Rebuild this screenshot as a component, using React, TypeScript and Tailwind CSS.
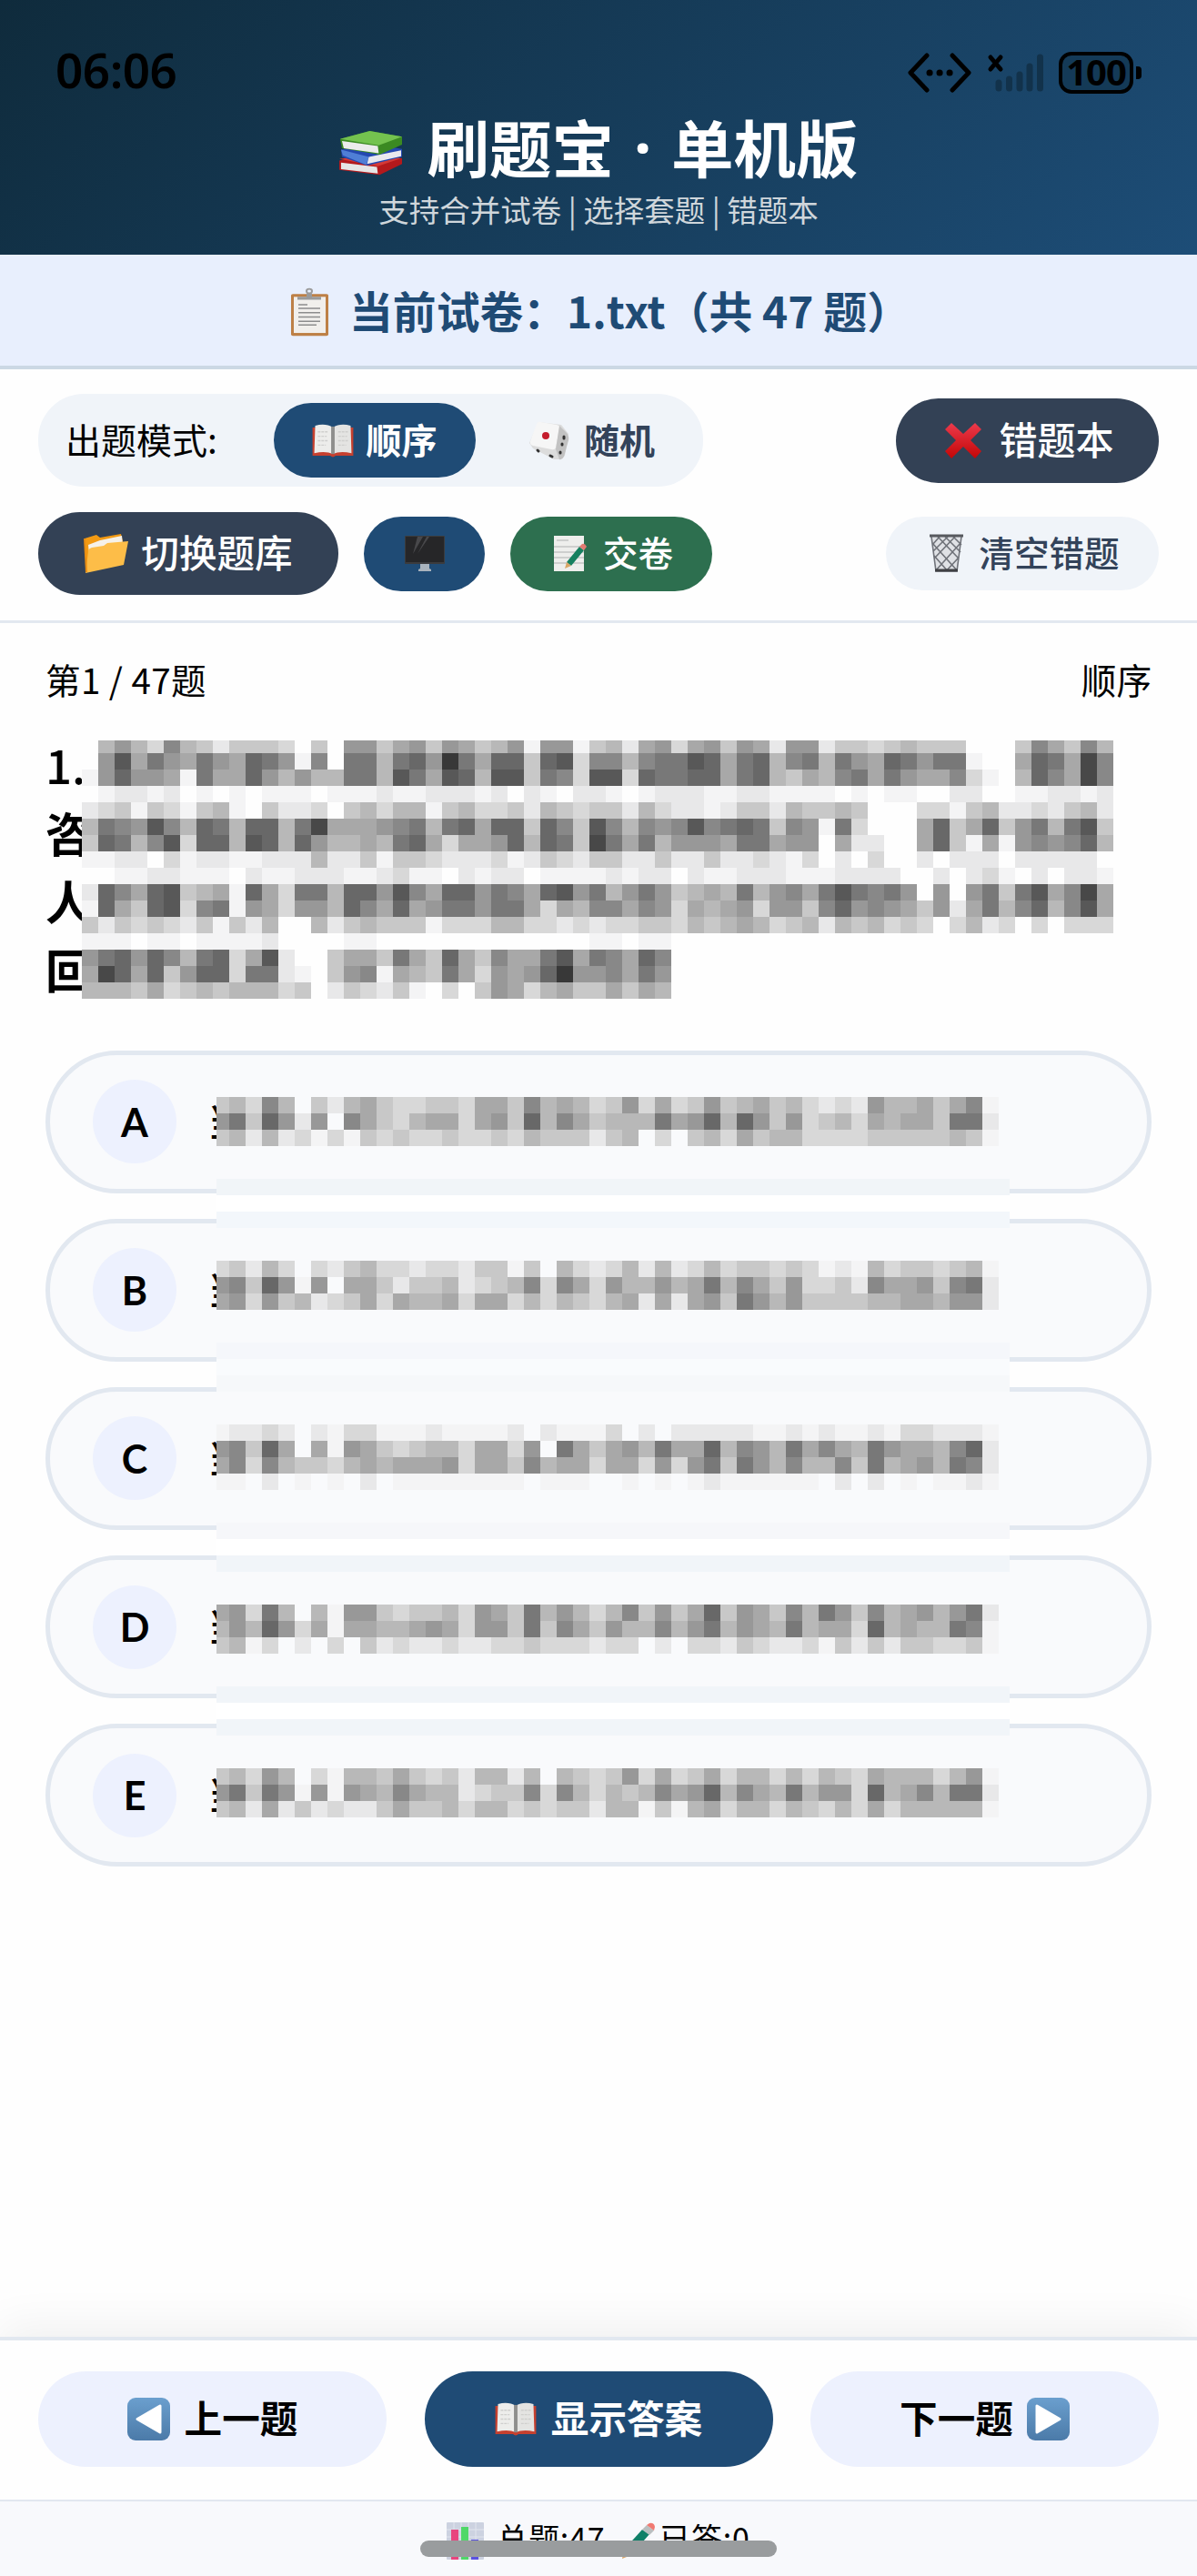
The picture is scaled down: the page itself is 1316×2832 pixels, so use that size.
import type { ReactNode } from "react";
import clsx from "clsx";

// one character per 18px cell: a hex digit is the grey level, "." leaves the cell empty
const questionRows = [
   ".b9bd8bcec ccd.c.99ca 9c9acb9f99 fcbea9da9c 9ae99eccdc bccc...c8a c8b",
   ".95a79a79a 679f8.77b7 6937a66c65 d88b87756a 76b87b79a6 7977f..a67 a48",
   "f9699af7aa 69b9bb77b5 7a56b55c78 d55d67766a 76bcab87a7 9aa8df.b68 a48",
   ".feefe.f.f .fff.fffef feeefe.ef. eef.feeeff eeffff.f.f f..ee..ffe efe",
   "edcfcdfcbf .ceed.cbdb bfcbddcebc dccebdeefe ccebccbc.. .ddfcbeede cbe",
   "b78958b67b 66b74aaa98 7b76a66c68 c58b898587 67c89f7d.. .a6ca6c97b 75c",
   "c67b85d66b 56b69bbab7 6adaa96b67 c47a7b999a 77a99.aee. .a6cfaf989 86b",
   "ffee.dfeef feeebeecfc cdeeedfecd ecceeceece edefd.e.d. .e.eee.eee ee.",
   "..ffeefff. effeeeffed ff.efee.ff ffefee.eff eeefffeeee ..e.edf.e. eef",
   "e68a65cbaf 6ad77b6695 8a66978a65 97b979cbab 7b98a75787 9.9.97c75a 84a",
   "f6ac65d87f 9ad99b68a6 a977977ada b88a89daba 9d99c86989 ac9ea7b86b 85a",
   "cecdcdecfc eb..becbcc cfdddbbdde deddccdbcb abdcbebcbd cd.dbed.d. ddd",
   "fff.ff.fff fe....ff.. .......... .ff.ff",
   "976968b76d a5e..caac7 ac6ac8aa75 a78a68",
   "a46a6c966d 77ef.c98fa bc7ad9a963 998a79",
   "bbbcadcbcb bbdc.ecdec f.d.c9adba ccacab",
];

const answerRows: Record<number, string> = {
   0: "cbd8b.ceba cddccdaac8 babdc9dadc 9cbacbdede 9bbaca8f",
   1: "97c69e9.8a cdbaada9c6 b8acbbb7a9 6b69c9dcbd abaac77e",
   2: "cbebedfdfc dcddcddcdb cccecb.d.c bdacbbdddd cccccbcf",
   10: "dcebd.decb ddeddeccfc .bdedbebed bdccdcdfef bdccdcbf",
   11: "98c69f9.aa ceccbedcb8 d8ad9bb9ba 7b8ac9ddce 8aa9c87e",
   12: "a9d9cbedca dabbadaadb dbcdbaeaea 9c79b9cccc bbaab99e",
   20: "feede.efdd fffeffffe. efffd.e.ee eeeffefeff efddeeef",
   21: "98c6a.af9a cdcbbdaad9 .7aca9b7aa 6b89b7a8ab 79aab86e",
   22: "a8d8bccdba baaa9daac8 baadaad9d9 7c79b8bb8c 7ba9b78e",
   23: "ff.e.f.f.e .ffffffff. fff..f.f.f effffff.e. e.f.ffef",
   31: "a9d7b.bf99 cdccbd9ac7 b9bdb8c9ca 6c9ac8b79c 8ba9b97e",
   32: "b9b69dafaa bba9ad99c7 c8ac9bb8b9 7b9ab7baad 6babb78f",
   33: "cbfd.e.d.c edeedeeddc dddedd.e.d decdeedfce ceccddcf",
   41: "cbd9b.dfbb cacdcebbeb .bcdc9dadc adbbdbdbcd abbbdb9f",
   42: "97c79f9f9a b8abbedcc8 d8bdbcb8a9 6b8ab7b99d 6ba8b77e",
   43: "cbeaecedee caccbdbbdc dccebbfcfb adbbdbcdbd adbbbbbf",
};

// flat strips left where the mosaic runs over the option borders
const strips: Record<number, string> = {
   5: "#f1f5f8",
   6: "#ffffff",
   7: "#f3f7fb",
   15: "#f5f7fb",
   16: "#f9fbfd",
   17: "#f6f8fa",
   26: "#f6f7fa",
   27: "#ffffff",
   28: "#f1f5f9",
   36: "#f1f5f9",
   37: "#ffffff",
   38: "#f1f5f9",
};

const grey = (c: string) => {
   if (c === "f") return "#f4f4f5";
   if (c === "e") return "#e8e8e9";
   const v = parseInt(c, 16) * 16 + 8;
   return `rgb(${v},${v},${v})`;
};

function Cells({ row, x, y, h = 18, trim = 0 }: { row: string; x: number; y: number; h?: number; trim?: number }) {
   return (
      <g>
         {row.replace(/ /g, "").split("").map((c, i) =>
            c === "." ? null : (
               <rect key={i} x={x + i * 18 + (i === 0 ? trim : 0)} y={y} width={18 - (i === 0 ? trim : 0)} height={h} fill={grey(c)} />
            )
         )}
      </g>
   );
}

function QuestionMosaic() {
   return (
      <svg width="1134" height="284" shapeRendering="crispEdges" className="absolute left-[40px] top-0">
         <rect width="1134" height="284" fill="#fefefe" />
         {questionRows.map((row, i) => (
            <Cells key={i} row={row} x={0} y={i === 0 ? 0 : i * 18 - 4} h={i === 0 ? 14 : 18} />
         ))}
      </svg>
   );
}

function AnswerMosaic() {
   return (
      <svg width="872" height="792" shapeRendering="crispEdges" className="absolute left-[188px] top-[51px]">
         <rect width="872" height="792" fill="#f9fafc" />
         {Object.entries(strips).map(([r, fill]) => (
            <rect key={r} y={Number(r) * 18} width="872" height="18" fill={fill} />
         ))}
         {Object.entries(answerRows).map(([r, row]) => (
            <Cells key={r} row={row} x={-4} y={Number(r) * 18} trim={4} />
         ))}
      </svg>
   );
}

function Books() {
   return (
      <svg width="71" height="49" viewBox="0 0 72 62" preserveAspectRatio="none">
         <path d="M1 41 34 34 71 38 71 46 46 61 1 54Z" fill="#b3191c" />
         <path d="M3 44 43 50 44 59 3 53Z" fill="#e6e6e6" />
         <path d="M1 39 35 33 70 38 44 49Z" fill="#d43a37" />
         <path d="M3 26 38 18 71 25 71 36 32 48 4 36Z" fill="#2448b0" />
         <path d="M3 26 34 36 31 47 5 34Z" fill="#4f7fd6" />
         <path d="M34 36 70 27 70 35 32 46Z" fill="#e9e9ee" />
         <path d="M2 11 35 0 71 8 71 19 46 33 4 24Z" fill="#3b8a22" />
         <path d="M4 14 44 21 45 31 6 24Z" fill="#ececec" />
         <path d="M2 11 35 0 71 8 45 20Z" fill="#74c34f" />
      </svg>
   );
}

function Clipboard() {
   return (
      <svg width="43" height="54" viewBox="0 0 43 68" preserveAspectRatio="none">
         <rect x="1" y="9" width="41" height="58" rx="2" fill="#bd8046" />
         <rect x="4" y="13" width="35" height="50" fill="#f1efec" />
         <circle cx="21" cy="5" r="3" fill="none" stroke="#9b9b9b" strokeWidth="2" />
         <path d="M18 8h6v5h10v4H8v-4h10Z" fill="#9a9a9a" />
         <path d="M9 24h10M9 29h24M9 35h24M9 41h24M9 47h24M9 52h20" stroke="#8d8d8d" strokeWidth="2" />
      </svg>
   );
}

function OpenBook() {
   return (
      <svg width="46" height="37" viewBox="0 0 46 38">
         <path d="M0 4h46v32H26q-3 3-6 0H0Z" fill="#c5402f" />
         <path d="M3 2q12-3 20 2v30q-8-4-21-1Z" fill="#ededeb" />
         <path d="M43 2Q31-1 23 4v30q8-4 21-1Z" fill="#e4e4e2" />
         <path d="M21 3h4v31h-4Z" fill="#8e8e8c" />
         <path d="M6 9h11M6 14h10M6 19h11M6 24h9M29 9h11M29 14h10M29 19h11M29 24h9" stroke="#cfcfcd" strokeWidth="1.5" strokeDasharray="3 1" />
      </svg>
   );
}

function Die() {
   return (
      <svg width="44" height="43" viewBox="0 0 44 43">
         <path d="M10 1 35 4 43 14 39 38 33 42 27 42 4 30 0 24Z" fill="#dcdcdc" />
         <path d="M8 3Q9 0 13 1L30 4Q34 5 33 8L29 29Q28 32 24 31L4 27Q0 26 1 22Z" fill="#f6f6f6" />
         <path d="M33 5 41 13Q44 17 43 21L38 39Q36 43 33 42L29 31Z" fill="#c2c2c2" />
         <circle cx="18" cy="16" r="4" fill="#c41c2c" />
         <path d="M38 17v2M36 25v1M34 34v1M9 32l1 1M23 38l2 1" stroke="#333" strokeWidth="3" strokeLinecap="round" />
      </svg>
   );
}

function Cross() {
   return (
      <svg width="40" height="40" viewBox="0 0 40 40">
         <defs>
            <linearGradient id="cross" x1="0" y1="0" x2="0" y2="1">
               <stop offset="0" stopColor="#ec3a4c" />
               <stop offset="1" stopColor="#c30606" />
            </linearGradient>
         </defs>
         <path d="M7 1 20 13 33 1 40 8 28 20 40 32 33 40 20 27 7 40 0 32 12 20 0 8Z" fill="url(#cross)" />
      </svg>
   );
}

function Folder() {
   return (
      <svg width="49" height="43" viewBox="0 0 49 43">
         <path d="M1 5 14 1 18 4 41 0 43 8 3 42Z" fill="#f39a13" />
         <path d="M5 12 18 7 42 2 43 12 6 22Z" fill="#f6f1e8" />
         <path d="M5 20Q5 16 9 15L22 13 26 10 49 8 44 34 2 43Z" fill="#fdbd48" />
         <path d="M1 5 3 42" stroke="#e88d13" strokeWidth="2" />
      </svg>
   );
}

function Monitor() {
   return (
      <svg width="44" height="40" viewBox="0 0 44 40">
         <path d="M17 30h10v6l2 1v2H15v-2l2-1Z" fill="#a9b3bd" />
         <rect width="44" height="31" rx="1" fill="#3b3b3d" />
         <rect x="1" y="1" width="42" height="28" fill="#262628" />
         <path d="M14 1h6L9 20ZM24 1h3L14 20Z" fill="#48484b" />
      </svg>
   );
}

function Memo() {
   return (
      <svg width="36" height="40" viewBox="0 0 36 40">
         <rect width="33" height="39" fill="#eeeeec" />
         <path d="M3 5h13M0 12h33M0 18h33M0 24h33M0 30h33" stroke="#c3c5c4" strokeWidth="1.5" />
         <path d="m14 29 14-17 5 4-14 17Z" fill="#16805f" />
         <path d="m28 12 3-3q3-1 5 3l-3 4Z" fill="#e27b72" />
         <path d="m14 29 5 4-7 3Z" fill="#d8a565" />
      </svg>
   );
}

function Trash() {
   return (
      <svg width="37" height="43" viewBox="0 0 37 43">
         <path d="M2 3h33l-5 38H7Z" fill="#dfe1e5" />
         <path d="M1 2h35M2 3l5 38h23l5-38M3 10l27 30M9 3l23 24M17 3l17 17M26 3l9 9M5 24l15 17M34 10 7 40M28 3 5 27M20 3 4 19M11 3l-8 9M31 27 18 41" stroke="#6f7279" strokeWidth="1.6" fill="none" />
         <path d="M6 40h25" stroke="#3f4044" strokeWidth="3" />
         <path d="M0 2h37" stroke="#57595e" strokeWidth="3" />
      </svg>
   );
}

function Arrow({ flip }: { flip?: boolean }) {
   return (
      <svg width="47" height="47" viewBox="0 0 47 47" className={clsx(flip && "-scale-x-100")}>
         <defs>
            <linearGradient id="key" x1="0" y1="0" x2="0" y2="1">
               <stop offset="0" stopColor="#6b9fce" />
               <stop offset="1" stopColor="#4b7aa8" />
            </linearGradient>
         </defs>
         <rect width="47" height="47" rx="9" fill="url(#key)" />
         <path d="M11 23.500 36 9v29Z" fill="#fff" stroke="#fff" strokeWidth="3" strokeLinejoin="round" />
      </svg>
   );
}

function Chart() {
   return (
      <svg width="41" height="41" viewBox="0 0 41 41">
         <rect width="41" height="41" rx="1" fill="#ccd2e0" />
         <path d="M8 0v41M16 0v41M24 0v41M32 0v41M0 8h41M0 16h41M0 24h41M0 32h41" stroke="#e1e5ee" />
         <path d="M5 8h8v33H5Z" fill="#e8457e" />
         <path d="M16 5h8v36h-8Z" fill="#4fd868" />
         <path d="M27 19h8v22h-8Z" fill="#5a52e0" />
      </svg>
   );
}

function Pencil() {
   return (
      <svg width="38" height="40" viewBox="0 0 38 40">
         <path d="M3 30 23 8l8 5L11 36Z" fill="#108068" />
         <path d="m23 8 5-5 8 6-5 5Z" fill="#b9bfc0" />
         <path d="m28 3 3-2q5-1 6 4l-1 4Z" fill="#f07a72" />
         <path d="m3 30 8 6-10 4Z" fill="#dba76a" />
      </svg>
   );
}

function StatusBar() {
   return (
      <div className="flex h-[46px] items-center justify-between px-[61px] text-black">
         <span className="-translate-y-[3px] font-['Noto_Sans'] text-[53px] font-semibold leading-[46px] tracking-[-0.5px]">06:06</span>
         <div className="flex items-center">
            <svg width="70" height="44" viewBox="0 0 70 44" fill="none" stroke="#000" strokeWidth="5" strokeLinecap="round" strokeLinejoin="round">
               <path d="M21 3 3 22l18 19M49 3l18 19-18 19" />
               <path d="M24 22h.1M35 22h.1M46 22h.1" strokeWidth="7" />
            </svg>
            <svg width="64" height="44" viewBox="0 0 64 44" className="ml-[17px]" fill="none" strokeLinecap="round">
               <path d="m4 5 11 13M15 5 4 18" stroke="#000" strokeWidth="5" />
               <path d="M13 33v6M24.500 29v10M36 24v15M47 15v24M58.500 5v34" stroke="#12324b" strokeWidth="7" />
            </svg>
            <div className="ml-[15px] flex h-[46px] w-[82px] items-center justify-center rounded-[14px] border-4 border-black bg-[#143a57] text-[40px] font-bold leading-none tracking-[-1px]">
               <span className="-translate-y-[1px] font-['Noto_Sans'] leading-[38px]">100</span>
            </div>
            <div className="ml-[3px] h-[14px] w-[6px] rounded-r-[4px] bg-black" />
         </div>
      </div>
   );
}

function Pill({ className, children }: { className: string; children: ReactNode }) {
   return <button className={clsx("flex shrink-0 items-center justify-center whitespace-nowrap rounded-full leading-none", className)}>{children}</button>;
}

// CJK glyphs sit a little low in their line box
function Label({ children }: { children: ReactNode }) {
   return <span className="-translate-y-[2px]">{children}</span>;
}

export default function App() {
   return (
      <div className="flex h-[2832px] w-[1316px] flex-col overflow-hidden bg-[#fefefe] font-['Noto_Sans_CJK_SC',sans-serif] leading-none text-black">
         <header className="h-[280px] shrink-0 bg-[linear-gradient(135deg,#0f2b3c,#1d4d77)] pt-[57px]">
            <StatusBar />
            <div className="mt-[22px] flex h-[72px] items-center justify-center gap-[26px] text-white">
               <span className="pt-[15px]"><Books /></span>
               <h1 className="flex text-[68.500px] font-bold">
                  刷题宝<span className="w-[63px] text-center font-['Noto_Sans']">·</span>单机版
               </h1>
            </div>
            <p className="mt-[15px] text-center text-[33.500px] leading-[36px] text-[#cfd6db]">支持合并试卷 | 选择套题 | 错题本</p>
         </header>

         <div className="flex h-[126px] shrink-0 items-center justify-center gap-[22px] border-b-4 border-[#cbd8e4] bg-[#e8effd] pl-[4px] text-[#1f4b75]">
            <span className="pt-[4px]"><Clipboard /></span>
            <span className="text-[47.800px] font-bold">当前试卷：1.txt（共 47 题）</span>
         </div>

         <section className="flex h-[279px] shrink-0 flex-col border-b-[3px] border-[#e2e8f0] px-[42px] pt-[27px]">
            <div className="flex items-center justify-between">
               <div className="flex h-[102px] w-[731px] items-center rounded-[50px] bg-[#f0f4f9] pl-[30px] text-[39px]">
                  <span className="w-[229px] shrink-0 -translate-y-[2px]">出题模式:</span>
                  <Pill className="h-[82px] w-[222px] gap-[13px] bg-[#1f4b75] font-bold text-white">
                     <OpenBook /><Label>顺序</Label>
                  </Pill>
                  <Pill className="h-[82px] w-[256px] gap-[16px] font-bold text-[#33435a]">
                     <Die /><Label>随机</Label>
                  </Pill>
               </div>
               <Pill className="h-[93px] w-[289px] gap-[19px] bg-[#334155] pl-[5px] text-[42px] font-medium text-white">
                  <Cross /><Label>错题本</Label>
               </Pill>
            </div>
            <div className="mt-[28px] flex items-center">
               <Pill className="h-[91px] w-[330px] gap-[14px] bg-[#334155] text-[41.600px] font-medium text-white">
                  <Folder /><Label>切换题库</Label>
               </Pill>
               <Pill className="ml-[28px] h-[82px] w-[133px] bg-[#1f4b75]">
                  <Monitor />
               </Pill>
               <Pill className="ml-[28px] h-[82px] w-[222px] gap-[18px] bg-[#2d6f4f] pl-[5px] text-[38.600px] font-medium text-white">
                  <Memo /><Label>交卷</Label>
               </Pill>
               <Pill className="ml-auto h-[81px] w-[300px] gap-[17px] bg-[#f0f4f9] pl-[5px] text-[38.600px] font-medium text-[#33435a]">
                  <Trash /><Label>清空错题</Label>
               </Pill>
            </div>
         </section>

         <main className="flex-1 px-[50px] pt-[41px]">
            <div className="flex items-center justify-between text-[38.600px] leading-[40px]">
               <span className="tracking-[0.4px]">第1 / 47题</span>
               <span>顺序</span>
            </div>
            <div className="relative mt-[48px] h-[284px] text-[51px] font-bold leading-[75px]">
               <div className="-translate-y-[11px]">
                  <p className="font-medium">1.</p>
                  <p>咨</p>
                  <p>人</p>
                  <p>回</p>
               </div>
               <QuestionMosaic />
            </div>
            <div className="relative mt-[56.500px] flex flex-col gap-[27.600px]">
               {["A", "B", "C", "D", "E"].map((letter) => (
                  <div key={letter} className="flex h-[157.500px] items-center rounded-full border-[5.500px] border-[#e2e8f0] bg-[#f9fafc] pl-[47px]">
                     <span className="flex size-[92px] items-center justify-center rounded-full bg-[#edf1fe] font-['Lato'] text-[43px] font-bold">{letter}</span>
                     <span className="ml-[34px] -translate-y-[2px] text-[43px] font-medium">当</span>
                  </div>
               ))}
               <AnswerMosaic />
            </div>
         </main>

         <div className="flex h-[179px] shrink-0 items-start justify-between border-t-4 border-[#e2e8f0] bg-[#fefefe] px-[42px] pt-[34px] text-[41.600px] font-bold shadow-[0_-12px_46px_rgba(0,0,0,0.06)]">
            <Pill className="h-[105px] w-[383px] gap-[16px] bg-[#edf1fe]"><Arrow /><Label>上一题</Label></Pill>
            <Pill className="h-[105px] w-[383px] gap-[16px] bg-[#1f4b75] text-white"><OpenBook /><Label>显示答案</Label></Pill>
            <Pill className="h-[105px] w-[383px] gap-[15px] bg-[#edf1fe]"><Label>下一题</Label><Arrow flip /></Pill>
         </div>

         <footer className="relative flex h-[84px] shrink-0 items-start justify-center border-t-2 border-[#e2e8f0] bg-[#f8f9fc] pt-[23px] text-[33.900px]">
            <Chart />
            <span className="ml-[14px] tracking-[0.8px]">总题:47</span>
            <span className="ml-[18px]"><Pencil /></span>
            <span className="ml-[4px] tracking-[0.8px]">已答:0</span>
            <div className="absolute left-[462px] top-[43px] h-[18px] w-[392px] rounded-full bg-[#999c9e]" />
         </footer>
      </div>
   );
}
